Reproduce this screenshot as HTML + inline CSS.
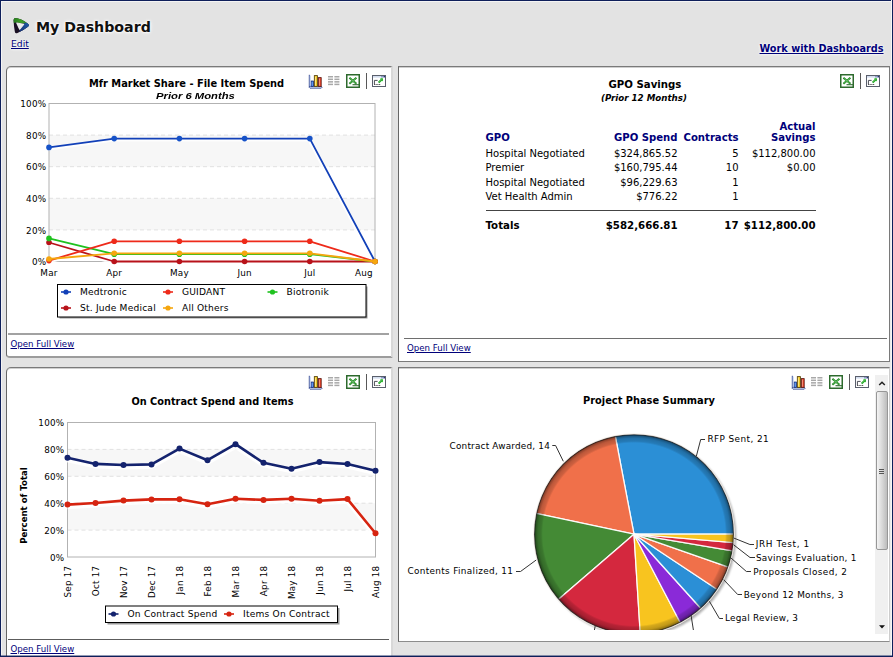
<!DOCTYPE html>
<html><head><meta charset="utf-8"><title>My Dashboard</title>
<style>
html,body{margin:0;padding:0}
body{width:893px;height:657px;overflow:hidden;position:relative;background:#e3e3e3;font-family:'DejaVu Sans','Liberation Sans',sans-serif;font-size:10px;color:#000}
.abs,.ic{position:absolute}
.panel{position:absolute;background:#fff;box-sizing:border-box;border:1px solid #7a7a7a;border-left-color:#666}
.pl_{border-right:2px solid #d8d8d8;border-bottom:2px solid #9c9c9c;border-top-left-radius:5px;border-bottom-left-radius:4px}
.panel{box-shadow:inset 0 1px 0 #cfcfcf}
a{color:#00007a;text-decoration:underline}
.t{position:absolute;white-space:nowrap;line-height:1}
.hb{font-family:'DejaVu Sans','Liberation Sans',sans-serif;font-weight:bold}
.ax{font-family:'DejaVu Sans','Liberation Sans',sans-serif;font-size:8.8px;letter-spacing:.22px;fill:#000}
.lg{font-family:'DejaVu Sans','Liberation Sans',sans-serif;font-size:9.1px;letter-spacing:.2px;fill:#000}
.pl{font-family:'DejaVu Sans','Liberation Sans',sans-serif;font-size:8.9px;fill:#000}
.ayt{font-family:'DejaVu Sans','Liberation Sans',sans-serif;font-weight:bold;font-size:9.3px;fill:#000}
.hr{position:absolute;height:1px;background:#6e6e6e}
table.g{position:absolute;border-collapse:collapse;font-size:10px}
table.g td{padding:0;height:14.5px;line-height:14.5px;white-space:nowrap;vertical-align:bottom}
.nv{color:#00007a;font-family:'DejaVu Sans','Liberation Sans',sans-serif;font-weight:bold;font-size:10.1px}
.r{text-align:right}
svg{overflow:visible}
</style></head><body>

<!-- title -->
<svg class="ic" style="left:11px;top:16px" width="20" height="20" viewBox="0 0 20 20">
<defs><clipPath id="lgc"><path d="M2.6 4.4 Q2.3 1.7 5.2 2 Q10.4 2.8 17 7.7 Q18.9 9.3 17 10.7 Q12 14.6 6.5 17 Q4.2 17.9 3.8 15.4 Q2.8 10 2.6 4.4 Z"/></clipPath>
<linearGradient id="lgg" x1="0" y1="0" x2="1" y2="0"><stop offset="0" stop-color="#1f6e1f"/><stop offset=".5" stop-color="#3ea024"/><stop offset="1" stop-color="#1f6f4a"/></linearGradient>
<linearGradient id="lgb" x1="1" y1="0" x2="0" y2="1"><stop offset="0" stop-color="#1f62b0"/><stop offset="1" stop-color="#172a6c"/></linearGradient></defs>
<g clip-path="url(#lgc)"><rect width="20" height="20" fill="#190f22"/>
<path d="M0 0 H20 V7.4 L12.6 7.6 L5.4 6.5 L0 7.2 Z" fill="url(#lgg)"/>
<path d="M12.8 7.4 L20 5.4 V14 L8.5 20 L8.6 13.6 Z" fill="url(#lgb)"/></g>
<path d="M5.8 7 L12.6 8.3 L8.7 13.2 Z" fill="#ececec" stroke="#ececec" stroke-width="1.2" stroke-linejoin="round"/>
</svg>
<div class="t hb" style="left:36px;top:19.5px;font-size:14.2px;color:#111;text-shadow:0 0 2px #fff,0 0 3px #fff,0 0 4px #fff">My Dashboard</div>
<a class="t" style="left:11px;top:39px;font-size:9.2px;text-shadow:0 0 2px #fff,0 0 3px #fff">Edit</a>
<a class="t hb" style="left:759.5px;top:44px;font-size:9.72px;text-shadow:0 0 2px #fff,0 0 3px #fff">Work with Dashboards</a>

<!-- panels -->
<div class="panel pl_" style="left:6px;top:66px;width:387px;height:292px"></div>
<div class="panel" style="left:398px;top:66px;width:492px;height:296px"></div>
<div class="panel pl_" style="left:6px;top:367px;width:387px;height:300px"></div>
<div class="panel" style="left:398px;top:367px;width:492px;height:275px;border-right-color:#cdcdcd;border-bottom-color:#8c8c8c"></div>

<!-- panel 1 -->
<div class="t hb" style="left:89px;top:78.5px;font-size:9.85px">Mfr Market Share - File Item Spend</div>
<div class="t" style="left:155.5px;top:90.5px;font-family:'Liberation Sans',sans-serif;font-weight:bold;font-style:italic;font-size:9.9px;transform:scaleX(1.14);transform-origin:0 0">Prior 6 Months</div>
<svg class="ic" style="left:307.5px;top:73.5px" width="15" height="15" viewBox="0 0 15 15">
<path d="M1.1 13.2 L2 12.2 H13 L14.2 13.2 L13.2 14.2 H2 Z" fill="#d4e2fa" stroke="#33458f" stroke-width=".8"/>
<path d="M1.3 0.8 V13" stroke="#33458f" stroke-width="1"/>
<path d="M2.2 1.5 V12" stroke="#b9cdf2" stroke-width=".9"/>
<rect x="3.2" y="7" width="2.4" height="5.4" fill="#2f74e6" stroke="#14256e" stroke-width=".7"/>
<rect x="6.3" y="1.6" width="3.1" height="10.8" fill="#eec320" stroke="#4e3a08" stroke-width=".8"/>
<rect x="10.3" y="3.6" width="2.9" height="8.8" fill="#e6442e" stroke="#57150c" stroke-width=".8"/>
<rect x="7.1" y="2.6" width="0.9" height="9" fill="#fbe98c"/>
<rect x="11" y="4.6" width=".8" height="7" fill="#f6a088"/>
<rect x="3.8" y="7.8" width=".7" height="4" fill="#8fb6f5"/>
</svg><svg class="ic" style="left:328px;top:76px" width="12" height="10" viewBox="0 0 12 10"><rect x="0" y="0.0" width="5" height="1.5" fill="#a8a8a8"/><rect x="6.4" y="0.0" width="5" height="1.5" fill="#a8a8a8"/><rect x="0" y="2.55" width="5" height="1.5" fill="#a8a8a8"/><rect x="6.4" y="2.55" width="5" height="1.5" fill="#a8a8a8"/><rect x="0" y="5.1" width="5" height="1.5" fill="#a8a8a8"/><rect x="6.4" y="5.1" width="5" height="1.5" fill="#a8a8a8"/><rect x="0" y="7.6499999999999995" width="5" height="1.5" fill="#a8a8a8"/><rect x="6.4" y="7.6499999999999995" width="5" height="1.5" fill="#a8a8a8"/></svg><svg class="ic" style="left:346px;top:74px" width="14" height="14" viewBox="0 0 14 14">
<rect x=".75" y=".75" width="12.5" height="12.5" fill="#fff" stroke="#2d6a2d" stroke-width="1.5"/>
<path d="M3.4 3.8 L10.4 9.8 M10.4 3.8 L3.4 9.8" stroke="#1c861c" stroke-width="1.9" fill="none"/>
<path d="M4 4.4 L9.8 9.3 M9.8 4.4 L4 9.3" stroke="#8bd68b" stroke-width=".6" fill="none"/>
<path d="M6.5 10.7 H13" stroke="#2d6a2d" stroke-width="1.1"/>
</svg><div class="ic" style="left:366px;top:73px;width:1px;height:16px;background:#585858"></div><svg class="ic" style="left:372px;top:75px" width="14" height="12" viewBox="0 0 14 12">
<rect x=".5" y=".5" width="13" height="11" fill="#fff" stroke="#5a5f6c" stroke-width="1"/>
<rect x="1" y="1" width="8" height="1.6" fill="#d3ddee"/><rect x="9" y="1" width="4" height="1.6" fill="#8f9fc4"/><rect x="11.8" y="1" width="1.2" height="1.2" fill="#26357a"/>
<path d="M2.4 9.2 V5.4 H5.6" stroke="#4d4f58" stroke-width="1" fill="none"/>
<path d="M2.2 9.5 H9" stroke="#333" stroke-width="1" stroke-dasharray="1.2 1"/>
<path d="M6.6 7.6 L10 4.3" stroke="#12b012" stroke-width="1.9"/>
<path d="M8 3.4 L10.9 3.3 L10.9 6.4 Z" fill="#12b012"/>
<path d="M6.4 7.8 L10.2 4" stroke="#e6a6f0" stroke-width=".5" stroke-opacity=".7"/>
</svg>
<div class="hr" style="left:8px;top:333px;width:381px;height:2px;background:#a2a2a2"></div>
<a class="t" style="left:10.5px;top:339.5px;font-size:8.65px">Open Full View</a>

<!-- panel 2 -->
<div class="t hb" style="left:608.5px;top:79.5px;font-size:10.19px">GPO Savings</div>
<div class="t hb" style="left:601px;top:93.5px;font-size:8.69px;font-style:italic">(Prior 12 Months)</div>
<svg class="ic" style="left:840px;top:74px" width="14" height="14" viewBox="0 0 14 14">
<rect x=".75" y=".75" width="12.5" height="12.5" fill="#fff" stroke="#2d6a2d" stroke-width="1.5"/>
<path d="M3.4 3.8 L10.4 9.8 M10.4 3.8 L3.4 9.8" stroke="#1c861c" stroke-width="1.9" fill="none"/>
<path d="M4 4.4 L9.8 9.3 M9.8 4.4 L4 9.3" stroke="#8bd68b" stroke-width=".6" fill="none"/>
<path d="M6.5 10.7 H13" stroke="#2d6a2d" stroke-width="1.1"/>
</svg><div class="ic" style="left:860px;top:73px;width:1px;height:16px;background:#585858"></div><svg class="ic" style="left:865.5px;top:75px" width="14" height="12" viewBox="0 0 14 12">
<rect x=".5" y=".5" width="13" height="11" fill="#fff" stroke="#5a5f6c" stroke-width="1"/>
<rect x="1" y="1" width="8" height="1.6" fill="#d3ddee"/><rect x="9" y="1" width="4" height="1.6" fill="#8f9fc4"/><rect x="11.8" y="1" width="1.2" height="1.2" fill="#26357a"/>
<path d="M2.4 9.2 V5.4 H5.6" stroke="#4d4f58" stroke-width="1" fill="none"/>
<path d="M2.2 9.5 H9" stroke="#333" stroke-width="1" stroke-dasharray="1.2 1"/>
<path d="M6.6 7.6 L10 4.3" stroke="#12b012" stroke-width="1.9"/>
<path d="M8 3.4 L10.9 3.3 L10.9 6.4 Z" fill="#12b012"/>
<path d="M6.4 7.8 L10.2 4" stroke="#e6a6f0" stroke-width=".5" stroke-opacity=".7"/>
</svg>
<table class="g" style="left:485.5px;top:117.5px">
<tr><td class="nv" style="width:104px"></td><td class="nv r" style="width:88px"></td><td class="nv r" style="width:61px"></td><td class="nv r" style="width:77px;height:11.5px;line-height:11.5px">Actual</td></tr>
<tr><td class="nv" style="height:14.5px;line-height:12px;vertical-align:top">GPO</td><td class="nv r" style="height:14.5px;line-height:12px;vertical-align:top">GPO Spend</td><td class="nv r" style="height:14.5px;line-height:12px;vertical-align:top">Contracts</td><td class="nv r" style="height:14.5px;line-height:12px;vertical-align:top">Savings</td></tr>
<tr><td>Hospital Negotiated</td><td class="r">$324,865.52</td><td class="r">5</td><td class="r">$112,800.00</td></tr>
<tr><td>Premier</td><td class="r">$160,795.44</td><td class="r">10</td><td class="r">$0.00</td></tr>
<tr><td>Hospital Negotiated</td><td class="r">$96,229.63</td><td class="r">1</td><td class="r"></td></tr>
<tr><td>Vet Health Admin</td><td class="r">$776.22</td><td class="r">1</td><td class="r"></td></tr>
</table>
<div class="hr" style="left:485.5px;top:210px;width:330px;background:#444"></div>
<table class="g hb" style="left:485.5px;top:219px;font-size:10.22px">
<tr><td style="width:104px">Totals</td><td class="r" style="width:88px">$582,666.81</td><td class="r" style="width:61px">17</td><td class="r" style="width:77px">$112,800.00</td></tr>
</table>
<div class="hr" style="left:404px;top:338px;width:483px"></div>
<a class="t" style="left:407px;top:343.5px;font-size:8.65px">Open Full View</a>

<!-- panel 3 -->
<svg class="ic" style="left:307.5px;top:374.5px" width="15" height="15" viewBox="0 0 15 15">
<path d="M1.1 13.2 L2 12.2 H13 L14.2 13.2 L13.2 14.2 H2 Z" fill="#d4e2fa" stroke="#33458f" stroke-width=".8"/>
<path d="M1.3 0.8 V13" stroke="#33458f" stroke-width="1"/>
<path d="M2.2 1.5 V12" stroke="#b9cdf2" stroke-width=".9"/>
<rect x="3.2" y="7" width="2.4" height="5.4" fill="#2f74e6" stroke="#14256e" stroke-width=".7"/>
<rect x="6.3" y="1.6" width="3.1" height="10.8" fill="#eec320" stroke="#4e3a08" stroke-width=".8"/>
<rect x="10.3" y="3.6" width="2.9" height="8.8" fill="#e6442e" stroke="#57150c" stroke-width=".8"/>
<rect x="7.1" y="2.6" width="0.9" height="9" fill="#fbe98c"/>
<rect x="11" y="4.6" width=".8" height="7" fill="#f6a088"/>
<rect x="3.8" y="7.8" width=".7" height="4" fill="#8fb6f5"/>
</svg><svg class="ic" style="left:328px;top:377px" width="12" height="10" viewBox="0 0 12 10"><rect x="0" y="0.0" width="5" height="1.5" fill="#a8a8a8"/><rect x="6.4" y="0.0" width="5" height="1.5" fill="#a8a8a8"/><rect x="0" y="2.55" width="5" height="1.5" fill="#a8a8a8"/><rect x="6.4" y="2.55" width="5" height="1.5" fill="#a8a8a8"/><rect x="0" y="5.1" width="5" height="1.5" fill="#a8a8a8"/><rect x="6.4" y="5.1" width="5" height="1.5" fill="#a8a8a8"/><rect x="0" y="7.6499999999999995" width="5" height="1.5" fill="#a8a8a8"/><rect x="6.4" y="7.6499999999999995" width="5" height="1.5" fill="#a8a8a8"/></svg><svg class="ic" style="left:346px;top:375px" width="14" height="14" viewBox="0 0 14 14">
<rect x=".75" y=".75" width="12.5" height="12.5" fill="#fff" stroke="#2d6a2d" stroke-width="1.5"/>
<path d="M3.4 3.8 L10.4 9.8 M10.4 3.8 L3.4 9.8" stroke="#1c861c" stroke-width="1.9" fill="none"/>
<path d="M4 4.4 L9.8 9.3 M9.8 4.4 L4 9.3" stroke="#8bd68b" stroke-width=".6" fill="none"/>
<path d="M6.5 10.7 H13" stroke="#2d6a2d" stroke-width="1.1"/>
</svg><div class="ic" style="left:366px;top:374px;width:1px;height:16px;background:#585858"></div><svg class="ic" style="left:372px;top:376px" width="14" height="12" viewBox="0 0 14 12">
<rect x=".5" y=".5" width="13" height="11" fill="#fff" stroke="#5a5f6c" stroke-width="1"/>
<rect x="1" y="1" width="8" height="1.6" fill="#d3ddee"/><rect x="9" y="1" width="4" height="1.6" fill="#8f9fc4"/><rect x="11.8" y="1" width="1.2" height="1.2" fill="#26357a"/>
<path d="M2.4 9.2 V5.4 H5.6" stroke="#4d4f58" stroke-width="1" fill="none"/>
<path d="M2.2 9.5 H9" stroke="#333" stroke-width="1" stroke-dasharray="1.2 1"/>
<path d="M6.6 7.6 L10 4.3" stroke="#12b012" stroke-width="1.9"/>
<path d="M8 3.4 L10.9 3.3 L10.9 6.4 Z" fill="#12b012"/>
<path d="M6.4 7.8 L10.2 4" stroke="#e6a6f0" stroke-width=".5" stroke-opacity=".7"/>
</svg>
<div class="t hb" style="left:131.5px;top:397px;font-size:9.75px">On Contract Spend and Items</div>
<div class="hr" style="left:8px;top:639px;width:381px;background:#5c5c5c"></div>
<a class="t" style="left:10.5px;top:645px;font-size:8.65px">Open Full View</a>

<!-- panel 4 -->
<svg class="ic" style="left:790.5px;top:374.5px" width="15" height="15" viewBox="0 0 15 15">
<path d="M1.1 13.2 L2 12.2 H13 L14.2 13.2 L13.2 14.2 H2 Z" fill="#d4e2fa" stroke="#33458f" stroke-width=".8"/>
<path d="M1.3 0.8 V13" stroke="#33458f" stroke-width="1"/>
<path d="M2.2 1.5 V12" stroke="#b9cdf2" stroke-width=".9"/>
<rect x="3.2" y="7" width="2.4" height="5.4" fill="#2f74e6" stroke="#14256e" stroke-width=".7"/>
<rect x="6.3" y="1.6" width="3.1" height="10.8" fill="#eec320" stroke="#4e3a08" stroke-width=".8"/>
<rect x="10.3" y="3.6" width="2.9" height="8.8" fill="#e6442e" stroke="#57150c" stroke-width=".8"/>
<rect x="7.1" y="2.6" width="0.9" height="9" fill="#fbe98c"/>
<rect x="11" y="4.6" width=".8" height="7" fill="#f6a088"/>
<rect x="3.8" y="7.8" width=".7" height="4" fill="#8fb6f5"/>
</svg><svg class="ic" style="left:811px;top:377px" width="12" height="10" viewBox="0 0 12 10"><rect x="0" y="0.0" width="5" height="1.5" fill="#a8a8a8"/><rect x="6.4" y="0.0" width="5" height="1.5" fill="#a8a8a8"/><rect x="0" y="2.55" width="5" height="1.5" fill="#a8a8a8"/><rect x="6.4" y="2.55" width="5" height="1.5" fill="#a8a8a8"/><rect x="0" y="5.1" width="5" height="1.5" fill="#a8a8a8"/><rect x="6.4" y="5.1" width="5" height="1.5" fill="#a8a8a8"/><rect x="0" y="7.6499999999999995" width="5" height="1.5" fill="#a8a8a8"/><rect x="6.4" y="7.6499999999999995" width="5" height="1.5" fill="#a8a8a8"/></svg><svg class="ic" style="left:829px;top:375px" width="14" height="14" viewBox="0 0 14 14">
<rect x=".75" y=".75" width="12.5" height="12.5" fill="#fff" stroke="#2d6a2d" stroke-width="1.5"/>
<path d="M3.4 3.8 L10.4 9.8 M10.4 3.8 L3.4 9.8" stroke="#1c861c" stroke-width="1.9" fill="none"/>
<path d="M4 4.4 L9.8 9.3 M9.8 4.4 L4 9.3" stroke="#8bd68b" stroke-width=".6" fill="none"/>
<path d="M6.5 10.7 H13" stroke="#2d6a2d" stroke-width="1.1"/>
</svg><div class="ic" style="left:849px;top:374px;width:1px;height:16px;background:#585858"></div><svg class="ic" style="left:855px;top:376px" width="14" height="12" viewBox="0 0 14 12">
<rect x=".5" y=".5" width="13" height="11" fill="#fff" stroke="#5a5f6c" stroke-width="1"/>
<rect x="1" y="1" width="8" height="1.6" fill="#d3ddee"/><rect x="9" y="1" width="4" height="1.6" fill="#8f9fc4"/><rect x="11.8" y="1" width="1.2" height="1.2" fill="#26357a"/>
<path d="M2.4 9.2 V5.4 H5.6" stroke="#4d4f58" stroke-width="1" fill="none"/>
<path d="M2.2 9.5 H9" stroke="#333" stroke-width="1" stroke-dasharray="1.2 1"/>
<path d="M6.6 7.6 L10 4.3" stroke="#12b012" stroke-width="1.9"/>
<path d="M8 3.4 L10.9 3.3 L10.9 6.4 Z" fill="#12b012"/>
<path d="M6.4 7.8 L10.2 4" stroke="#e6a6f0" stroke-width=".5" stroke-opacity=".7"/>
</svg>
<div class="t hb" style="left:583px;top:396px;font-size:9.83px">Project Phase Summary</div>
<!-- scrollbar -->
<div class="abs" style="left:875px;top:375px;width:13px;height:259px;background:#f0f0f0"></div>
<div class="abs" style="left:875.5px;top:391px;width:12px;height:159px;box-sizing:border-box;border:1px solid #979797;border-radius:2px;background:linear-gradient(90deg,#f4f4f4,#d6d6d6 55%,#bcbcbc)"></div>
<svg class="ic" style="left:875px;top:375px" width="13" height="259" viewBox="0 0 13 259">
<path d="M4.2 10 L7 7.3 L9.8 10" fill="none" stroke="#222" stroke-width="1.5"/>
<path d="M4 250.3 H10 L7 253.6 Z" fill="#111"/>
<path d="M4 94.5 H9 M4 96.5 H9 M4 98.5 H9" stroke="#555" stroke-width="1"/>
</svg>

<!-- charts -->
<svg class="ic" style="left:0;top:0" width="893" height="657" viewBox="0 0 893 657">
<rect x="49.0" y="103.5" width="326.0" height="158.0" fill="#fff"/>
<rect x="49.0" y="135.1" width="326.0" height="31.599999999999994" fill="#f7f7f7"/>
<rect x="49.0" y="198.3" width="326.0" height="31.599999999999994" fill="#f7f7f7"/>
<line x1="49.0" x2="375.0" y1="229.9" y2="229.9" stroke="#e1e1e1" stroke-width="1" stroke-dasharray="4 3"/>
<line x1="49.0" x2="375.0" y1="198.3" y2="198.3" stroke="#e1e1e1" stroke-width="1" stroke-dasharray="4 3"/>
<line x1="49.0" x2="375.0" y1="166.7" y2="166.7" stroke="#e1e1e1" stroke-width="1" stroke-dasharray="4 3"/>
<line x1="49.0" x2="375.0" y1="135.1" y2="135.1" stroke="#e1e1e1" stroke-width="1" stroke-dasharray="4 3"/>
<rect x="49.0" y="103.5" width="326.0" height="158.0" fill="none" stroke="#b2b2b2" stroke-width="1"/>
<polyline points="49.0,147.4 114.2,138.6 179.4,138.6 244.6,138.6 309.8,138.6 375.0,261.5" fill="none" stroke="#fff" stroke-opacity=".85" stroke-width="3.6" stroke-linejoin="round" transform="translate(-.5,1.2)"/>
<polyline points="49.0,242.5 114.2,261.5 179.4,261.5 244.6,261.5 309.8,261.5 375.0,261.5" fill="none" stroke="#fff" stroke-opacity=".85" stroke-width="3.6" stroke-linejoin="round" transform="translate(-.5,1.2)"/>
<polyline points="49.0,238.4 114.2,254.2 179.4,254.2 244.6,254.2 309.8,254.2 375.0,261.5" fill="none" stroke="#fff" stroke-opacity=".85" stroke-width="3.6" stroke-linejoin="round" transform="translate(-.5,1.2)"/>
<polyline points="49.0,260.6 114.2,241.3 179.4,241.3 244.6,241.3 309.8,241.3 375.0,261.5" fill="none" stroke="#fff" stroke-opacity=".85" stroke-width="3.6" stroke-linejoin="round" transform="translate(-.5,1.2)"/>
<polyline points="49.0,259.0 114.2,253.3 179.4,253.3 244.6,253.3 309.8,253.3 375.0,261.5" fill="none" stroke="#fff" stroke-opacity=".85" stroke-width="3.6" stroke-linejoin="round" transform="translate(-.5,1.2)"/>
<polyline points="49.0,147.4 114.2,138.6 179.4,138.6 244.6,138.6 309.8,138.6 375.0,261.5" fill="none" stroke="#1240b8" stroke-width="1.8" stroke-linejoin="round"/>
<circle cx="49.0" cy="147.4" r="2.8" fill="#1652c8"/>
<circle cx="114.2" cy="138.6" r="2.8" fill="#1652c8"/>
<circle cx="179.4" cy="138.6" r="2.8" fill="#1652c8"/>
<circle cx="244.6" cy="138.6" r="2.8" fill="#1652c8"/>
<circle cx="309.8" cy="138.6" r="2.8" fill="#1652c8"/>
<circle cx="375.0" cy="261.5" r="2.8" fill="#1652c8"/>
<polyline points="49.0,242.5 114.2,261.5 179.4,261.5 244.6,261.5 309.8,261.5 375.0,261.5" fill="none" stroke="#b8121a" stroke-width="1.8" stroke-linejoin="round"/>
<circle cx="49.0" cy="242.5" r="2.8" fill="#b8121a"/>
<circle cx="114.2" cy="261.5" r="2.8" fill="#b8121a"/>
<circle cx="179.4" cy="261.5" r="2.8" fill="#b8121a"/>
<circle cx="244.6" cy="261.5" r="2.8" fill="#b8121a"/>
<circle cx="309.8" cy="261.5" r="2.8" fill="#b8121a"/>
<circle cx="375.0" cy="261.5" r="2.8" fill="#b8121a"/>
<polyline points="49.0,238.4 114.2,254.2 179.4,254.2 244.6,254.2 309.8,254.2 375.0,261.5" fill="none" stroke="#1fc21f" stroke-width="1.8" stroke-linejoin="round"/>
<circle cx="49.0" cy="238.4" r="2.8" fill="#1fc21f"/>
<circle cx="114.2" cy="254.2" r="2.8" fill="#1fc21f"/>
<circle cx="179.4" cy="254.2" r="2.8" fill="#1fc21f"/>
<circle cx="244.6" cy="254.2" r="2.8" fill="#1fc21f"/>
<circle cx="309.8" cy="254.2" r="2.8" fill="#1fc21f"/>
<circle cx="375.0" cy="261.5" r="2.8" fill="#1fc21f"/>
<polyline points="49.0,260.6 114.2,241.3 179.4,241.3 244.6,241.3 309.8,241.3 375.0,261.5" fill="none" stroke="#ee2a1a" stroke-width="1.8" stroke-linejoin="round"/>
<circle cx="49.0" cy="260.6" r="2.8" fill="#ee2a1a"/>
<circle cx="114.2" cy="241.3" r="2.8" fill="#ee2a1a"/>
<circle cx="179.4" cy="241.3" r="2.8" fill="#ee2a1a"/>
<circle cx="244.6" cy="241.3" r="2.8" fill="#ee2a1a"/>
<circle cx="309.8" cy="241.3" r="2.8" fill="#ee2a1a"/>
<circle cx="375.0" cy="261.5" r="2.8" fill="#ee2a1a"/>
<polyline points="49.0,259.0 114.2,253.3 179.4,253.3 244.6,253.3 309.8,253.3 375.0,261.5" fill="none" stroke="#f5a60f" stroke-width="1.8" stroke-linejoin="round"/>
<circle cx="49.0" cy="259.0" r="2.8" fill="#f5a60f"/>
<circle cx="114.2" cy="253.3" r="2.8" fill="#f5a60f"/>
<circle cx="179.4" cy="253.3" r="2.8" fill="#f5a60f"/>
<circle cx="244.6" cy="253.3" r="2.8" fill="#f5a60f"/>
<circle cx="309.8" cy="253.3" r="2.8" fill="#f5a60f"/>
<circle cx="375.0" cy="261.5" r="2.8" fill="#f5a60f"/>
<text x="46.3" y="265.2" text-anchor="end" class="ax">0%</text>
<text x="46.3" y="233.6" text-anchor="end" class="ax">20%</text>
<text x="46.3" y="202.0" text-anchor="end" class="ax">40%</text>
<text x="46.3" y="170.4" text-anchor="end" class="ax">60%</text>
<text x="46.3" y="138.8" text-anchor="end" class="ax">80%</text>
<text x="46.3" y="107.2" text-anchor="end" class="ax">100%</text>
<text x="49.0" y="275.8" text-anchor="middle" class="ax">Mar</text>
<text x="114.2" y="275.8" text-anchor="middle" class="ax">Apr</text>
<text x="179.4" y="275.8" text-anchor="middle" class="ax">May</text>
<text x="244.6" y="275.8" text-anchor="middle" class="ax">Jun</text>
<text x="309.8" y="275.8" text-anchor="middle" class="ax">Jul</text>
<text x="364.0" y="275.8" text-anchor="middle" class="ax">Aug</text>
<rect x="59.5" y="286.5" width="308" height="32" fill="#444" opacity=".55"/>
<rect x="57.5" y="284.5" width="308.5" height="32.5" fill="#fff" stroke="#000" stroke-width="1"/>
<line x1="61" x2="71" y1="292" y2="292" stroke="#1240b8" stroke-width="1.6"/><circle cx="66" cy="292" r="2.6" fill="#1240b8"/><text x="80" y="295.3" class="lg">Medtronic</text>
<line x1="163" x2="173" y1="292" y2="292" stroke="#ee2a1a" stroke-width="1.6"/><circle cx="168" cy="292" r="2.6" fill="#ee2a1a"/><text x="182" y="295.3" class="lg">GUIDANT</text>
<line x1="267.5" x2="277.5" y1="292" y2="292" stroke="#1fc21f" stroke-width="1.6"/><circle cx="272.5" cy="292" r="2.6" fill="#1fc21f"/><text x="286.5" y="295.3" class="lg">Biotronik</text>
<line x1="61" x2="71" y1="308" y2="308" stroke="#b8121a" stroke-width="1.6"/><circle cx="66" cy="308" r="2.6" fill="#b8121a"/><text x="80" y="311.3" class="lg">St. Jude Medical</text>
<line x1="163" x2="173" y1="308" y2="308" stroke="#f5a60f" stroke-width="1.6"/><circle cx="168" cy="308" r="2.6" fill="#f5a60f"/><text x="182" y="311.3" class="lg">All Others</text>
<rect x="67.5" y="422.5" width="308.0" height="134.5" fill="#fff"/>
<rect x="67.5" y="449.4" width="308.0" height="26.900000000000034" fill="#f7f7f7"/>
<rect x="67.5" y="503.2" width="308.0" height="26.900000000000034" fill="#f7f7f7"/>
<line x1="67.5" x2="375.5" y1="530.1" y2="530.1" stroke="#e1e1e1" stroke-width="1" stroke-dasharray="4 3"/>
<line x1="67.5" x2="375.5" y1="503.2" y2="503.2" stroke="#e1e1e1" stroke-width="1" stroke-dasharray="4 3"/>
<line x1="67.5" x2="375.5" y1="476.3" y2="476.3" stroke="#e1e1e1" stroke-width="1" stroke-dasharray="4 3"/>
<line x1="67.5" x2="375.5" y1="449.4" y2="449.4" stroke="#e1e1e1" stroke-width="1" stroke-dasharray="4 3"/>
<rect x="67.5" y="422.5" width="308.0" height="134.5" fill="none" stroke="#b2b2b2" stroke-width="1"/>
<polyline points="67.5,457.8 95.5,463.9 123.5,465.0 151.5,464.4 179.5,448.6 207.5,460.2 235.5,444.2 263.5,462.8 291.5,468.8 319.5,462.1 347.5,464.0 375.5,470.7" fill="none" stroke="#fff" stroke-opacity=".9" stroke-width="5.5" stroke-linejoin="round" transform="translate(0,1.8)"/>
<polyline points="67.5,504.6 95.5,503.0 123.5,500.6 151.5,499.4 179.5,499.2 207.5,504.2 235.5,498.7 263.5,499.9 291.5,498.7 319.5,500.8 347.5,499.1 375.5,533.3" fill="none" stroke="#fff" stroke-opacity=".9" stroke-width="5.5" stroke-linejoin="round" transform="translate(0,1.8)"/>
<polyline points="67.5,457.8 95.5,463.9 123.5,465.0 151.5,464.4 179.5,448.6 207.5,460.2 235.5,444.2 263.5,462.8 291.5,468.8 319.5,462.1 347.5,464.0 375.5,470.7" fill="none" stroke="#14236e" stroke-width="2.6" stroke-linejoin="round"/>
<circle cx="67.5" cy="457.8" r="3" fill="#14236e"/>
<circle cx="95.5" cy="463.9" r="3" fill="#14236e"/>
<circle cx="123.5" cy="465.0" r="3" fill="#14236e"/>
<circle cx="151.5" cy="464.4" r="3" fill="#14236e"/>
<circle cx="179.5" cy="448.6" r="3" fill="#14236e"/>
<circle cx="207.5" cy="460.2" r="3" fill="#14236e"/>
<circle cx="235.5" cy="444.2" r="3" fill="#14236e"/>
<circle cx="263.5" cy="462.8" r="3" fill="#14236e"/>
<circle cx="291.5" cy="468.8" r="3" fill="#14236e"/>
<circle cx="319.5" cy="462.1" r="3" fill="#14236e"/>
<circle cx="347.5" cy="464.0" r="3" fill="#14236e"/>
<circle cx="375.5" cy="470.7" r="3" fill="#14236e"/>
<polyline points="67.5,504.6 95.5,503.0 123.5,500.6 151.5,499.4 179.5,499.2 207.5,504.2 235.5,498.7 263.5,499.9 291.5,498.7 319.5,500.8 347.5,499.1 375.5,533.3" fill="none" stroke="#d62410" stroke-width="2.6" stroke-linejoin="round"/>
<circle cx="67.5" cy="504.6" r="3" fill="#d62410"/>
<circle cx="95.5" cy="503.0" r="3" fill="#d62410"/>
<circle cx="123.5" cy="500.6" r="3" fill="#d62410"/>
<circle cx="151.5" cy="499.4" r="3" fill="#d62410"/>
<circle cx="179.5" cy="499.2" r="3" fill="#d62410"/>
<circle cx="207.5" cy="504.2" r="3" fill="#d62410"/>
<circle cx="235.5" cy="498.7" r="3" fill="#d62410"/>
<circle cx="263.5" cy="499.9" r="3" fill="#d62410"/>
<circle cx="291.5" cy="498.7" r="3" fill="#d62410"/>
<circle cx="319.5" cy="500.8" r="3" fill="#d62410"/>
<circle cx="347.5" cy="499.1" r="3" fill="#d62410"/>
<circle cx="375.5" cy="533.3" r="3" fill="#d62410"/>
<text x="64.4" y="560.7" text-anchor="end" class="ax">0%</text>
<text x="64.4" y="533.8" text-anchor="end" class="ax">20%</text>
<text x="64.4" y="506.9" text-anchor="end" class="ax">40%</text>
<text x="64.4" y="480.0" text-anchor="end" class="ax">60%</text>
<text x="64.4" y="453.1" text-anchor="end" class="ax">80%</text>
<text x="64.4" y="426.2" text-anchor="end" class="ax">100%</text>
<text transform="translate(71.0,565.6) rotate(-90)" text-anchor="end" class="ax">Sep 17</text>
<text transform="translate(99.0,565.6) rotate(-90)" text-anchor="end" class="ax">Oct 17</text>
<text transform="translate(127.0,565.6) rotate(-90)" text-anchor="end" class="ax">Nov 17</text>
<text transform="translate(155.0,565.6) rotate(-90)" text-anchor="end" class="ax">Dec 17</text>
<text transform="translate(183.0,565.6) rotate(-90)" text-anchor="end" class="ax">Jan 18</text>
<text transform="translate(211.0,565.6) rotate(-90)" text-anchor="end" class="ax">Feb 18</text>
<text transform="translate(239.0,565.6) rotate(-90)" text-anchor="end" class="ax">Mar 18</text>
<text transform="translate(267.0,565.6) rotate(-90)" text-anchor="end" class="ax">Apr 18</text>
<text transform="translate(295.0,565.6) rotate(-90)" text-anchor="end" class="ax">May 18</text>
<text transform="translate(323.0,565.6) rotate(-90)" text-anchor="end" class="ax">Jun 18</text>
<text transform="translate(351.0,565.6) rotate(-90)" text-anchor="end" class="ax">Jul 18</text>
<text transform="translate(379.0,565.6) rotate(-90)" text-anchor="end" class="ax">Aug 18</text>
<text transform="translate(27.3,505.5) rotate(-90)" text-anchor="middle" class="ayt" textLength="76.5" lengthAdjust="spacingAndGlyphs">Percent of Total</text>
<rect x="107.5" y="608" width="232" height="16.5" fill="#444" opacity=".55"/>
<rect x="105.5" y="606" width="232" height="16.5" fill="#fff" stroke="#000" stroke-width="1"/>
<line x1="108.5" x2="118.5" y1="614" y2="614" stroke="#14236e" stroke-width="1.6"/><circle cx="113.5" cy="614" r="2.6" fill="#14236e"/><text x="127.5" y="617.3" class="lg">On Contract Spend</text>
<line x1="224" x2="234" y1="614" y2="614" stroke="#d62410" stroke-width="1.6"/><circle cx="229" cy="614" r="2.6" fill="#d62410"/><text x="243" y="617.3" class="lg">Items On Contract</text>
<defs>
<radialGradient id="bev" cx="50%" cy="50%" r="50%"><stop offset="0" stop-color="#000" stop-opacity="0"/><stop offset=".912" stop-color="#000" stop-opacity="0"/><stop offset=".93" stop-color="#000" stop-opacity=".14"/><stop offset=".96" stop-color="#000" stop-opacity=".22"/><stop offset=".985" stop-color="#000" stop-opacity=".42"/><stop offset="1" stop-color="#000" stop-opacity=".72"/></radialGradient>
<filter id="ps" x="-20%" y="-20%" width="140%" height="140%"><feGaussianBlur stdDeviation="1.3"/></filter>
<clipPath id="pclip"><rect x="399" y="368" width="476" height="262"/></clipPath>
</defs>
<g clip-path="url(#pclip)">
<circle cx="636.2" cy="536.4000000000001" r="100.0" fill="#000" opacity=".32" filter="url(#ps)"/>
<path d="M634.0,534.2 L734.00,534.20 A100.0,100.0 0 0 0 615.26,435.97 Z" fill="#2b8fd6" stroke="#fff" stroke-opacity=".92" stroke-width="1.3" stroke-linejoin="round"/>
<path d="M634.0,534.2 L615.26,435.97 A100.0,100.0 0 0 0 536.19,513.41 Z" fill="#f0704a" stroke="#fff" stroke-opacity=".92" stroke-width="1.3" stroke-linejoin="round"/>
<path d="M634.0,534.2 L536.19,513.41 A100.0,100.0 0 0 0 558.30,599.54 Z" fill="#448a35" stroke="#fff" stroke-opacity=".92" stroke-width="1.3" stroke-linejoin="round"/>
<path d="M634.0,534.2 L558.30,599.54 A100.0,100.0 0 0 0 640.28,634.00 Z" fill="#d4283e" stroke="#fff" stroke-opacity=".92" stroke-width="1.3" stroke-linejoin="round"/>
<path d="M634.0,534.2 L640.28,634.00 A100.0,100.0 0 0 0 680.33,622.82 Z" fill="#f8c41f" stroke="#fff" stroke-opacity=".92" stroke-width="1.3" stroke-linejoin="round"/>
<path d="M634.0,534.2 L680.33,622.82 A100.0,100.0 0 0 0 700.91,608.51 Z" fill="#8a2ad8" stroke="#fff" stroke-opacity=".92" stroke-width="1.3" stroke-linejoin="round"/>
<path d="M634.0,534.2 L700.91,608.51 A100.0,100.0 0 0 0 717.29,589.54 Z" fill="#2b8fd6" stroke="#fff" stroke-opacity=".92" stroke-width="1.3" stroke-linejoin="round"/>
<path d="M634.0,534.2 L717.29,589.54 A100.0,100.0 0 0 0 728.44,567.09 Z" fill="#f0704a" stroke="#fff" stroke-opacity=".92" stroke-width="1.3" stroke-linejoin="round"/>
<path d="M634.0,534.2 L728.44,567.09 A100.0,100.0 0 0 0 732.60,550.88 Z" fill="#448a35" stroke="#fff" stroke-opacity=".92" stroke-width="1.3" stroke-linejoin="round"/>
<path d="M634.0,534.2 L732.60,550.88 A100.0,100.0 0 0 0 733.65,542.57 Z" fill="#d4283e" stroke="#fff" stroke-opacity=".92" stroke-width="1.3" stroke-linejoin="round"/>
<path d="M634.0,534.2 L733.65,542.57 A100.0,100.0 0 0 0 734.00,534.20 Z" fill="#f8c41f" stroke="#fff" stroke-opacity=".92" stroke-width="1.3" stroke-linejoin="round"/>
<circle cx="634.0" cy="534.2" r="100.0" fill="url(#bev)"/>
<circle cx="634.0" cy="534.2" r="99.4" fill="none" stroke="#000" stroke-opacity=".35" stroke-width="1.2"/>
<circle cx="634.0" cy="534.2" r="100.4" fill="none" stroke="#f0e6dc" stroke-opacity=".8" stroke-width=".8"/>
<polyline points="696.4,456 700.7,439.5 705,439.5" fill="none" stroke="#333" stroke-width="1"/>
<polyline points="563.3,461.3 555.6,445.5 552.3,445.5" fill="none" stroke="#333" stroke-width="1"/>
<polyline points="536.2,560 520.5,571.5 516,571.5" fill="none" stroke="#333" stroke-width="1"/>
<polyline points="733.7,538 749.9,544.5 754,544.5" fill="none" stroke="#333" stroke-width="1"/>
<polyline points="733.5,544.7 750,557.5 755,557.5" fill="none" stroke="#333" stroke-width="1"/>
<polyline points="731,558 746.4,571.5 751,571.5" fill="none" stroke="#333" stroke-width="1"/>
<polyline points="723.7,579.7 737.7,594.5 742,594.5" fill="none" stroke="#333" stroke-width="1"/>
<polyline points="709.4,601.3 719.4,618.5 723,618.5" fill="none" stroke="#333" stroke-width="1"/>
<polyline points="595.2,626 592.5,640" fill="none" stroke="#333" stroke-width="1"/>
<polyline points="691,615 695,640" fill="none" stroke="#333" stroke-width="1"/>
<text x="707.4" y="442.2" class="pl" textLength="61.3">RFP Sent, 21</text>
<text x="449.6" y="448.5" class="pl" textLength="100.2">Contract Awarded, 14</text>
<text x="407.4" y="574.3000000000001" class="pl" textLength="105.6">Contents Finalized, 11</text>
<text x="755.8" y="547.4000000000001" class="pl" textLength="53.4">JRH Test, 1</text>
<text x="756.0" y="561.1" class="pl" textLength="100.4">Savings Evaluation, 1</text>
<text x="753.2" y="574.6" class="pl" textLength="93.7">Proposals Closed, 2</text>
<text x="743.7" y="597.5" class="pl" textLength="99.6">Beyond 12 Months, 3</text>
<text x="725.0" y="621.2" class="pl" textLength="72.9">Legal Review, 3</text>
</g>
</svg>

<!-- window frame -->
<div class="abs" style="left:890px;top:66px;width:1px;height:576px;background:#ebebeb"></div>
<div class="abs" style="left:0;top:1px;width:893px;height:1px;background:#f4f4f4"></div>
<div class="abs" style="left:1px;top:0;width:1px;height:657px;background:#f4f4f4"></div>
<div class="abs" style="left:0;top:0;width:893px;height:1px;background:#0e1f5a"></div>
<div class="abs" style="left:0;top:0;width:1px;height:657px;background:#0e1f5a"></div>
<div class="abs" style="left:891px;top:0;width:1px;height:657px;background:#f6f6f6"></div><div class="abs" style="left:892px;top:0;width:1px;height:657px;background:#0e1f5a"></div>
<div class="abs" style="left:0;top:655px;width:893px;height:1px;background:rgba(14,31,90,.45)"></div><div class="abs" style="left:0;top:656px;width:893px;height:1px;background:#0e1f5a"></div>
</body></html>
